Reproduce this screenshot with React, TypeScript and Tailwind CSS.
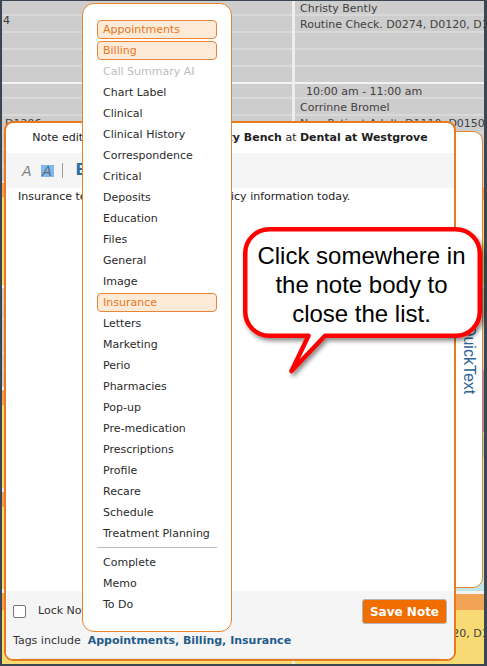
import React from "react";

// faint 17px slot rules used on the schedule background blocks
const slot =
  "bg-[repeating-linear-gradient(to_bottom,transparent_0px,transparent_13px,#d9d9d9_13px,#d9d9d9_15px,transparent_15px,transparent_17px)]";

type TagState = "sel" | "dis" | "normal";

const tags: [string, TagState][] = [
  ["Appointments", "sel"],
  ["Billing", "sel"],
  ["Call Summary AI", "dis"],
  ["Chart Label", "normal"],
  ["Clinical", "normal"],
  ["Clinical History", "normal"],
  ["Correspondence", "normal"],
  ["Critical", "normal"],
  ["Deposits", "normal"],
  ["Education", "normal"],
  ["Files", "normal"],
  ["General", "normal"],
  ["Image", "normal"],
  ["Insurance", "sel"],
  ["Letters", "normal"],
  ["Marketing", "normal"],
  ["Perio", "normal"],
  ["Pharmacies", "normal"],
  ["Pop-up", "normal"],
  ["Pre-medication", "normal"],
  ["Prescriptions", "normal"],
  ["Profile", "normal"],
  ["Recare", "normal"],
  ["Schedule", "normal"],
  ["Treatment Planning", "normal"],
];

const statusTags = ["Complete", "Memo", "To Do"];

function tagClass(s: TagState) {
  if (s === "sel") return "bg-[#fdebd8] border-[#eb8535] text-[#ec761c]";
  if (s === "dis") return "border-transparent text-[#bdbdbd]";
  return "border-transparent text-[#2b2b2b]";
}

function TagItem({ label, state }: { label: string; state: TagState }) {
  return (
    <div
      className={`h-[19px] shrink-0 my-px flex items-center px-[5px] border rounded-[4px] text-[11px] leading-[19px] whitespace-nowrap ${tagClass(
        state
      )}`}
    >
      {label}
    </div>
  );
}

function Schedule() {
  return (
    <div className="flex w-full h-full text-[11px] leading-[16px] text-[#404040] whitespace-nowrap">
      {/* left provider column */}
      <div className="w-[290px] flex flex-col overflow-hidden">
        <div className={`h-[81px] bg-[#cdcdcd] ${slot} pl-[1px] pt-[12px]`}>4</div>
        <div className="h-[2px] bg-[#f3f3f3]" />
        <div className={`h-[97px] bg-[#cdcdcd] ${slot} pl-[3px] pt-[32px]`}>D1206</div>
        <div className="h-[2px] bg-[#e2e2e2]" />
        <div className="h-[14px] bg-[#f1a356]" />
        <div className="h-[88px] bg-[#f8da74]" />
        <div className="h-[3px] bg-[#f3f3f3]" />
        <div className={`h-[99px] bg-[#cdcdcd] ${slot}`} />
        <div className="h-[3px] bg-[#f3f3f3]" />
        <div className="h-[15px] bg-[#f1a356]" />
        <div className="h-[83px] bg-[#f8da74]" />
        <div className="h-[4px] bg-[#e9e9e9]" />
        <div className="h-[15px] bg-[#f1a356]" />
        <div className="h-[82px] bg-[#f8da74]" />
        <div className="h-[4px] bg-[#f3f3f3]" />
        <div className="h-[17px] bg-[#f1a356]" />
        <div className="flex-1 bg-[#f8da74]" />
      </div>
      <div className="w-[3px] bg-[#ededed]" />
      {/* right provider column */}
      <div className="flex-1 flex flex-col overflow-hidden">
        <div className={`h-[81px] bg-[#cdcdcd] ${slot} pl-[5px]`}>
          <div>Christy Bently</div>
          <div>Routine Check. D0274, D0120, D1110</div>
        </div>
        <div className="h-[2px] bg-[#f3f3f3]" />
        <div className={`h-[101px] bg-[#cdcdcd] ${slot} pl-[5px]`}>
          <div className="pl-[6px]">10:00 am - 11:00 am</div>
          <div>Corrinne Bromel</div>
          <div>New Patient Adult. D1110, D0150</div>
        </div>
        <div className="h-[2px] bg-[#e2e2e2]" />
        <div className="h-[13px] bg-[#f1a356]" />
        <div className="h-[85px] bg-[#f8da74]" />
        <div className="h-[3px] bg-[#f3f3f3]" />
        <div className={`h-[82px] bg-[#cdcdcd] ${slot}`} />
        <div className="h-[62px] bg-[#9a8cd9]" />
        <div className="h-[3px] bg-[#c9c9c9]" />
        <div className="h-[22px] bg-[#8fd0d2]" />
        <div className="h-[134px] bg-[#bfe6e6]" />
        <div className="h-[3px] bg-[#f3f3f3]" />
        <div className="h-[16px] bg-[#f1a356]" />
        <div className="flex-1 bg-[#f8da74] pl-[5px]">
          <div>Maria Lopez</div>
          <div>Routine Check. D0274, D0120, D1110</div>
        </div>
      </div>
    </div>
  );
}

function QuickTextPanel() {
  return (
    <div className="absolute left-[420px] top-[131px] w-[63px] h-[457px] rounded-[10px] border border-[#e8832a] bg-white flex justify-end">
      <div className="w-[27px] flex items-center justify-center">
        <span className="[writing-mode:vertical-rl] text-[16px] leading-none text-[#2b6496] font-['Liberation_Sans',Arial,sans-serif]">
          QuickText
        </span>
      </div>
    </div>
  );
}

function NoteEditor() {
  return (
    <div className="absolute left-[4px] top-[121px] w-[452px] h-[540px] rounded-[9px] border-2 border-[#e97a1d] bg-white overflow-hidden flex flex-col">
      <div className="h-[30px] flex items-center justify-center text-[11px] text-[#222] whitespace-nowrap">
        Note editor for active patient&nbsp;<b>Christy Bench</b>&nbsp;at&nbsp;<b>Dental at Westgrove</b>
      </div>
      <div className="h-[35px] bg-[#f5f5f5] flex items-center pl-[16px]">
        <span className="text-[14px] italic text-[#808080] leading-none">A</span>
        <span className="ml-[9px] w-[13px] h-[12px] bg-[#7db8f2] flex items-center justify-center text-[14px] italic text-[#666] leading-none">
          A
        </span>
        <span className="ml-[8px] w-px h-[15px] bg-[#9a9a9a]" />
        <span className="ml-[13px] text-[15px] font-bold text-[#2e6da4] leading-none">B</span>
      </div>
      <div className="flex-1 px-[12px] pt-px text-[11px] leading-[16px] text-[#222] whitespace-nowrap">
        Insurance team confirmed the new policy information today.
      </div>
      <div className="h-[68px] bg-[#f5f5f5] flex flex-col px-[7px] pt-[8px]">
        <div className="flex items-center h-[25px]">
          <span className="w-[13px] h-[13px] border border-[#767676] rounded-[2px] bg-white" />
          <span className="ml-[12px] text-[11px] text-[#333]">Lock Note</span>
          <button className="ml-auto w-[85px] h-[25px] bg-[#f06e00] border border-[#b5b5b5] rounded-[3px] text-white font-bold text-[12px] leading-none">
            Save Note
          </button>
        </div>
        <div className="mt-[9px] flex text-[11px] leading-[16px] text-[#333] whitespace-nowrap">
          <span>Tags include</span>
          <span className="ml-[7px] font-bold text-[#1f5c8c]">Appointments, Billing, Insurance</span>
        </div>
        <div className="mt-auto mx-[8px] h-px bg-[#dedede]" />
      </div>
    </div>
  );
}

function TagMenu() {
  return (
    <div className="absolute left-[82px] top-[3px] w-[150px] h-[629px] rounded-[12px] border border-[#e8832a] bg-white pt-[15px] px-[14px] flex flex-col">
      {tags.map(([label, state]) => (
        <TagItem key={label} label={label} state={state} />
      ))}
      <div className="shrink-0 mt-[3px] mb-[4px] h-px bg-[#bdbdbd]" />
      {statusTags.map((label) => (
        <TagItem key={label} label={label} state="normal" />
      ))}
    </div>
  );
}

function Callout() {
  return (
    <>
      <svg
        className="absolute left-0 top-0 pointer-events-none"
        width="487"
        height="666"
        viewBox="0 0 487 666"
      >
        <defs>
          <filter id="calloutShadow" x="-10%" y="-10%" width="130%" height="140%">
            <feDropShadow dx="2" dy="3" stdDeviation="2" floodColor="#000" floodOpacity="0.45" />
          </filter>
        </defs>
        <path
          d="M 269.25 229.25 H 455.75 A 24 24 0 0 1 479.75 253.25 V 311.75 A 24 24 0 0 1 455.75 335.75 H 325 L 291.5 371 L 308.5 335.75 H 269.25 A 24 24 0 0 1 245.25 311.75 V 253.25 A 24 24 0 0 1 269.25 229.25 Z"
          fill="#ffffff"
          stroke="#ff0000"
          strokeWidth="4.5"
          strokeLinejoin="round"
          filter="url(#calloutShadow)"
        />
      </svg>
      <div className="absolute left-[242px] top-[228px] w-[239px] h-[112px] flex items-center justify-center text-center text-[24px] leading-[29px] text-black font-['Liberation_Sans',Arial,sans-serif] pointer-events-none">
        <div>
          Click somewhere in
          <br />
          the note body to
          <br />
          close the list.
        </div>
      </div>
    </>
  );
}

export default function App() {
  return (
    <div className="relative w-[487px] h-[666px] overflow-hidden bg-[#3b4651] pl-[2px] pr-[3px] pt-px pb-[2px] font-['DejaVu_Sans',Verdana,sans-serif]">
      <Schedule />
      <QuickTextPanel />
      <NoteEditor />
      <TagMenu />
      <Callout />
    </div>
  );
}
